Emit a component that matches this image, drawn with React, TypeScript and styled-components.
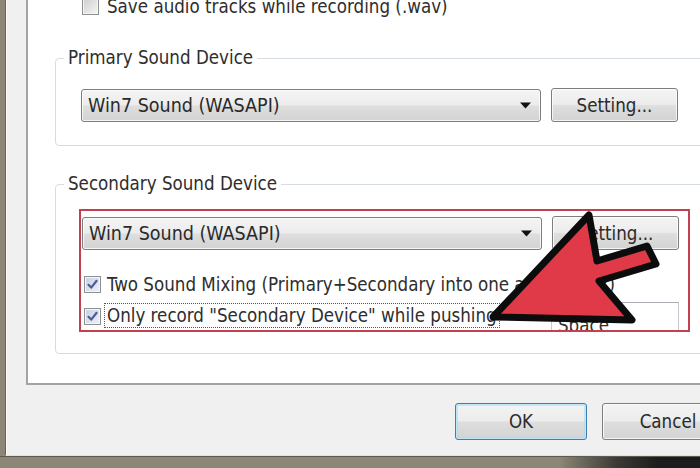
import React from "react";
import styled, { createGlobalStyle } from "styled-components";

const GlobalStyle = createGlobalStyle`
  html, body {
    margin: 0;
    padding: 0;
  }
  body {
    width: 700px;
    height: 468px;
    overflow: hidden;
    font-family: "DejaVu Sans Condensed", "DejaVu Sans", sans-serif;
    color: #2e2e2e;
  }
`;

const FONT = "18.6px";

const Screen = styled.div`
  position: relative;
  width: 700px;
  height: 468px;
  overflow: hidden;
  display: flex;
  flex-direction: column;
  background: #8b8676;
`;

const Dialog = styled.div`
  flex: 1;
  min-height: 0;
  display: flex;
  flex-direction: column;
  margin-left: 5px;
  padding-left: 20px;
  background: #f0f0f0;
  border-left: 1px solid #66625a;
  box-shadow: inset 1px 0 0 #fbfbf8;
  border-bottom: 1px solid #e4e4de;
`;

const BottomFrame = styled.div`
  height: 11px;
  flex: none;
  background: linear-gradient(
    to right,
    #8b8676 0%,
    #8b8676 80%,
    #3b3a36 88%,
    #1c1c1c 94%
  );
  border-top: 1px solid #5e5a50;
`;

const Panel = styled.div`
  height: 385px;
  box-sizing: border-box;
  flex: none;
  margin-right: -40px;
  padding-left: 27px;
  display: flex;
  flex-direction: column;
  background: #fff;
  border-left: 2px solid #a3a3a3;
  border-bottom: 2px solid #a3a3a3;
`;

const TopRow = styled.div`
  display: flex;
  align-items: center;
  gap: 8px;
  height: 20px;
  margin-top: -4px;
  padding-left: 27px;
  font-size: ${FONT};
`;

const Group = styled.div<{ $top: number; $bottom: number }>`
  display: flex;
  flex-direction: column;
  margin-top: ${(p) => p.$top}px;
  padding: 0 0 ${(p) => p.$bottom}px 23px;
  border: 1px solid #d5dde2;
  border-radius: 4px;
`;

const Legend = styled.div`
  align-self: flex-start;
  margin: -12px 0 0 -15px;
  padding: 0 4px;
  background: #fff;
  font-size: ${FONT};
  line-height: 22px;
`;

const ControlRow = styled.div<{ $top?: number; $left?: number }>`
  display: flex;
  align-items: flex-end;
  gap: 10px;
  margin-top: ${(p) => p.$top ?? 0}px;
  margin-left: ${(p) => p.$left ?? 0}px;
`;

const buttonFace = `
  background: linear-gradient(#f4f4f4 0%, #ececec 48%, #dedede 52%, #d3d3d3 100%);
  border: 1px solid #7d7d7d;
  border-radius: 3px;
  box-shadow: inset 0 0 0 1px rgba(255, 255, 255, 0.75);
  box-sizing: border-box;
  font-size: ${FONT};
  color: #2a2a2a;
`;

const Combo = styled.div<{ $width: number }>`
  ${buttonFace}
  width: ${(p) => p.$width}px;
  height: 33px;
  display: flex;
  align-items: center;
  justify-content: space-between;
  padding: 0 9px 0 6px;
  font-size: 19.5px;
`;

const PushButton = styled.div<{ $width: number; $height: number; $focused?: boolean }>`
  ${buttonFace}
  width: ${(p) => p.$width}px;
  height: ${(p) => p.$height}px;
  display: flex;
  align-items: center;
  justify-content: center;
  ${(p) =>
    p.$focused &&
    `
    border-color: #3c7fb1;
    box-shadow: inset 0 0 0 1px #bfe6f8, inset 0 0 0 2px rgba(160, 215, 245, 0.5);
  `}
`;

const RedBox = styled.div`
  width: 611px;
  height: 123px;
  box-sizing: border-box;
  margin-top: 14px;
  padding: 5px 0 0 1px;
  border: 2px solid #c2404f;
  overflow: hidden;
  display: flex;
  flex-direction: column;
`;

const CheckRow = styled.div<{ $top: number; $align: string }>`
  display: flex;
  align-items: ${(p) => p.$align};
  margin-top: ${(p) => p.$top}px;
  min-height: 24px;
  font-size: ${FONT};
`;

const Box = styled.span<{ $checked?: boolean; $top?: number; $left?: number }>`
  flex: none;
  width: 17px;
  height: 17px;
  box-sizing: border-box;
  margin-top: ${(p) => p.$top ?? 0}px;
  margin-left: ${(p) => p.$left ?? 0}px;
  border: 1px solid #8e8f8f;
  background: ${(p) =>
    p.$checked
      ? "linear-gradient(135deg, #c9d0e2 0%, #eef1f8 100%)"
      : "linear-gradient(135deg, #cfcfcf 0%, #f4f4f4 100%)"};
  box-shadow: inset 0 0 0 1px #f6f6f6;
  display: flex;
  align-items: center;
  justify-content: center;
`;

const Label = styled.span<{ $focused?: boolean; $top?: number }>`
  margin-left: 3px;
  margin-top: ${(p) => p.$top ?? 0}px;
  padding: 0 2px;
  line-height: 23px;
  border: 1px ${(p) => (p.$focused ? "dotted #555" : "solid transparent")};
  white-space: nowrap;
`;

const TextBox = styled.div`
  flex: none;
  width: 128px;
  height: 44px;
  box-sizing: border-box;
  margin-left: auto;
  margin-right: 9px;
  padding: 12px 0 0 6px;
  border: 1px solid #c6c9cf;
  border-top-color: #a9acb2;
  font-size: ${FONT};
  line-height: 22px;
`;

const ButtonRow = styled.div`
  display: flex;
  justify-content: flex-end;
  gap: 15px;
  margin-top: 18px;
  margin-right: -40px;
  padding-right: 6px;
`;

const Overlay = styled.svg`
  position: absolute;
  left: 0;
  top: 0;
  width: 700px;
  height: 468px;
  pointer-events: none;
`;

function Check({ checked }: { checked?: boolean }) {
  return checked ? (
    <svg width="13" height="13" viewBox="0 0 13 13">
      <path
        d="M2.5 6.8 L5.2 9.6 L10.6 2.8"
        fill="none"
        stroke="#4a5d96"
        strokeWidth="2.2"
        strokeLinecap="round"
        strokeLinejoin="round"
      />
    </svg>
  ) : null;
}

function DropArrow() {
  return (
    <svg width="11" height="7" viewBox="0 0 11 7">
      <polygon points="0,0.5 11,0.5 5.5,6.5" fill="#111" />
    </svg>
  );
}

function DeviceRow({ top, left }: { top?: number; left?: number }) {
  return (
    <ControlRow $top={top} $left={left}>
      <Combo $width={460}>
        <span>Win7 Sound (WASAPI)</span>
        <DropArrow />
      </Combo>
      <PushButton $width={127} $height={34}>
        Setting...
      </PushButton>
    </ControlRow>
  );
}

export default function App() {
  return (
    <Screen>
      <GlobalStyle />
      <Dialog>
        <Panel>
          <TopRow>
            <Box />
            <span>Save audio tracks while recording (.wav)</span>
          </TopRow>

          <Group $top={42} $bottom={23}>
            <Legend>Primary Sound Device</Legend>
            <DeviceRow top={19} left={2} />
          </Group>

          <Group $top={38} $bottom={21}>
            <Legend>Secondary Sound Device</Legend>
            <RedBox>
              <DeviceRow />
              <CheckRow $top={22} $align="center">
                <Box $checked $left={2}>
                  <Check checked />
                </Box>
                <Label>Two Sound Mixing (Primary+Secondary into one audio track)</Label>
              </CheckRow>
              <CheckRow $top={6} $align="flex-start">
                <Box $checked $left={2} $top={6}>
                  <Check checked />
                </Box>
                <Label $focused $top={1}>
                  Only record "Secondary Device" while pushing
                </Label>
                <TextBox>Space</TextBox>
              </CheckRow>
            </RedBox>
          </Group>
        </Panel>

        <ButtonRow>
          <PushButton $width={132} $height={37} $focused>
            OK
          </PushButton>
          <PushButton $width={132} $height={37}>
            Cancel
          </PushButton>
        </ButtonRow>
      </Dialog>
      <BottomFrame />

      <Overlay viewBox="0 0 700 468">
        <polygon
          points="493,317 589,215 597,261 647,246 656,264 599,281 632,320"
          fill="#e03a48"
          stroke="#0c0c0c"
          strokeWidth="7"
          strokeLinejoin="round"
        />
      </Overlay>
    </Screen>
  );
}
